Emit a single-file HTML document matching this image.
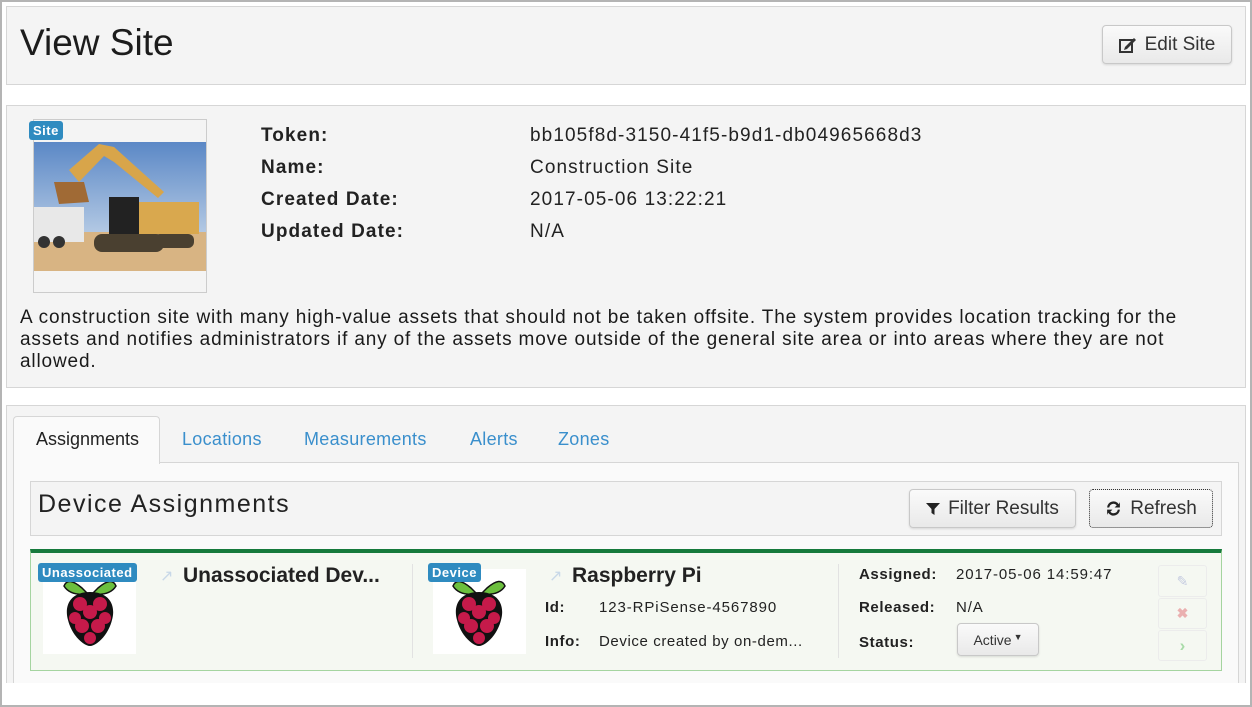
<!DOCTYPE html>
<html style="width:1252px;height:707px;overflow:hidden"><head><meta charset="utf-8"><style>
*{box-sizing:border-box;margin:0;padding:0}
body{width:1252px;height:707px;background:#fff;font-family:"Liberation Sans",sans-serif;color:#222;position:relative;overflow:hidden}
.abs{position:absolute}
.panel{background:#f4f4f4;border:1px solid #d6d6d6}
.btn{background:linear-gradient(#fafafa,#e9e9e9);border:1px solid #c8c8c8;border-radius:4px;box-shadow:0 1px 2px rgba(0,0,0,.12);font-size:19px;color:#333;display:flex;align-items:center;justify-content:center;gap:8px}
.badge{background:#2f8bc0;color:#fff;font-weight:bold;font-size:13px;border-radius:3px;padding:2px 4px;line-height:15px;letter-spacing:.5px}
.lbl{font-weight:bold;font-size:19px;color:#222;letter-spacing:1.1px}
.val{font-size:19px;color:#222;letter-spacing:1.1px}
.tab{font-size:18px;color:#3a8fcc;top:429px;letter-spacing:.3px}
.sm{font-size:15px;color:#222;letter-spacing:.9px}
.smb{font-size:15px;font-weight:bold;color:#222;letter-spacing:.6px}
</style></head><body>

<div class="abs panel" style="left:6px;top:6px;width:1240px;height:79px"></div>
<div class="abs" style="left:20px;top:22px;font-size:37px;color:#1c1c1c">View Site</div>
<div class="abs btn" style="left:1102px;top:25px;width:130px;height:39px">
<svg width="18" height="16" viewBox="0 0 18 16"><rect x="1" y="3" width="12" height="12" fill="none" stroke="#333" stroke-width="2"/><path d="M6 10 L15 1 L17 3 L8 12 L5 13Z" fill="#333"/></svg>Edit Site</div>

<div class="abs panel" style="left:6px;top:105px;width:1240px;height:283px"></div>
<div class="abs" style="left:33px;top:119px;width:174px;height:174px;border:1px solid #ccc;background:#f4f4f4"></div>
<svg class="abs" style="left:34px;top:142px" width="172" height="129" viewBox="0 0 172 129">
<defs><linearGradient id="sk" x1="0" y1="0" x2="0" y2="1"><stop offset="0" stop-color="#5b88c6"/><stop offset="1" stop-color="#d8e4f0"/></linearGradient></defs>
<rect width="172" height="129" fill="url(#sk)"/>
<rect y="90" width="172" height="39" fill="#d8b483"/>
<rect x="0" y="65" width="50" height="35" fill="#e8e8e8"/><circle cx="10" cy="100" r="6" fill="#333"/><circle cx="25" cy="100" r="6" fill="#333"/>
<path d="M35 28 L65 2 L80 5 L130 50 L124 56 L80 20 L70 14 L45 40Z" fill="#d8a54a"/>
<path d="M20 40 L50 40 L55 60 L25 62Z" fill="#a06a35"/>
<rect x="95" y="60" width="70" height="32" fill="#d9a84e"/><rect x="75" y="55" width="30" height="38" fill="#222"/>
<rect x="60" y="92" width="70" height="18" rx="8" fill="#4a4030"/><rect x="120" y="92" width="40" height="14" rx="6" fill="#4a4030"/>
</svg>
<div class="abs badge" style="left:29px;top:121px">Site</div>

<div class="abs lbl" style="left:261px;top:125px">Token:</div>
<div class="abs lbl" style="left:261px;top:157px">Name:</div>
<div class="abs lbl" style="left:261px;top:189px">Created Date:</div>
<div class="abs lbl" style="left:261px;top:221px">Updated Date:</div>
<div class="abs val" style="left:530px;top:125px">bb105f8d-3150-41f5-b9d1-db04965668d3</div>
<div class="abs val" style="left:530px;top:157px">Construction Site</div>
<div class="abs val" style="left:530px;top:189px">2017-05-06 13:22:21</div>
<div class="abs val" style="left:530px;top:221px">N/A</div>
<div class="abs" style="left:20px;top:307px;width:1195px;font-size:19px;letter-spacing:.85px;line-height:22px;color:#1a1a1a">A construction site with many high-value assets that should not be taken offsite. The system provides location tracking for the assets and notifies administrators if any of the assets move outside of the general site area or into areas where they are not allowed.</div>

<div class="abs panel" style="left:6px;top:405px;width:1240px;height:278px;border-bottom:none"></div>
<div class="abs" style="left:13px;top:462px;width:1226px;height:221px;border:1px solid #d6d6d6;border-bottom:none;background:#fafafa"></div>
<div class="abs" style="left:13px;top:416px;width:147px;height:48px;background:#fafafa;border:1px solid #d6d6d6;border-bottom:none;border-radius:4px 4px 0 0"></div>
<div class="abs" style="left:36px;top:429px;font-size:18px;color:#222">Assignments</div>
<div class="abs tab" style="left:182px">Locations</div>
<div class="abs tab" style="left:304px">Measurements</div>
<div class="abs tab" style="left:470px">Alerts</div>
<div class="abs tab" style="left:558px">Zones</div>

<div class="abs panel" style="left:30px;top:481px;width:1192px;height:55px"></div>
<div class="abs" style="left:38px;top:490px;font-size:25px;color:#222;letter-spacing:1.5px">Device Assignments</div>
<div class="abs btn" style="left:909px;top:489px;width:167px;height:39px">
<svg width="14" height="14" viewBox="0 0 14 14"><path d="M0 1 H14 L8.5 7 V13 L5.5 11 V7Z" fill="#222"/></svg>Filter Results</div>
<div class="abs btn" style="left:1089px;top:489px;width:124px;height:39px;border:1px dotted #333;box-shadow:none">
<svg width="17" height="17" viewBox="0 0 16 16"><path d="M2 7 A6 6 0 0 1 13 4 L14 2 V7 H9 L11 5 A4 4 0 0 0 4 7Z M14 9 A6 6 0 0 1 3 12 L2 14 V9 H7 L5 11 A4 4 0 0 0 12 9Z" fill="#222"/></svg>Refresh</div>

<div class="abs" style="left:30px;top:549px;width:1192px;height:122px;background:#f5f8f2;border:1px solid #a5d4a0;border-top:4px solid #167a3c"></div>
<div class="abs" style="left:412px;top:564px;width:1px;height:94px;background:#e2e2e2"></div>
<div class="abs" style="left:838px;top:564px;width:1px;height:94px;background:#e2e2e2"></div>

<svg width="0" height="0" style="position:absolute"><defs>
<g id="rpi">
<path d="M24 12 Q10 0 6 10 Q12 20 30 18Z M40 12 Q54 0 58 10 Q52 20 34 18Z" fill="#6cbf3e" stroke="#111" stroke-width="1.5"/>
<path d="M32 16 C12 16 6 30 10 44 C14 60 26 70 32 70 C38 70 50 60 54 44 C58 30 52 16 32 16Z" fill="#111"/>
<g fill="#c51a4a"><circle cx="22" cy="28" r="7"/><circle cx="42" cy="28" r="7"/><circle cx="32" cy="36" r="7"/><circle cx="17" cy="42" r="6"/><circle cx="47" cy="42" r="6"/><circle cx="24" cy="50" r="7"/><circle cx="40" cy="50" r="7"/><circle cx="32" cy="62" r="6"/></g>
</g></defs></svg>
<div class="abs" style="left:43px;top:569px;width:93px;height:85px;background:#fff"></div>
<svg class="abs" style="left:58px;top:576px" width="64" height="72" viewBox="0 0 64 72"><use href="#rpi"/></svg>
<div class="abs badge" style="left:38px;top:563px">Unassociated</div>
<div class="abs" style="left:433px;top:569px;width:93px;height:85px;background:#fff"></div>
<svg class="abs" style="left:447px;top:576px" width="64" height="72" viewBox="0 0 64 72"><use href="#rpi"/></svg>
<div class="abs badge" style="left:428px;top:563px">Device</div>

<div class="abs" style="left:160px;top:566px;font-size:16px;color:#c8d8e8">&#x2197;</div>
<div class="abs" style="left:183px;top:564px;font-size:21px;font-weight:bold;color:#222">Unassociated Dev...</div>
<div class="abs" style="left:549px;top:566px;font-size:16px;color:#c8d8e8">&#x2197;</div>
<div class="abs" style="left:572px;top:564px;font-size:21px;font-weight:bold;color:#222">Raspberry Pi</div>
<div class="abs smb" style="left:545px;top:599px">Id:</div>
<div class="abs sm" style="left:599px;top:599px">123-RPiSense-4567890</div>
<div class="abs smb" style="left:545px;top:633px">Info:</div>
<div class="abs sm" style="left:599px;top:633px;letter-spacing:.6px">Device created by on-dem...</div>

<div class="abs smb" style="left:859px;top:566px">Assigned:</div>
<div class="abs sm" style="left:956px;top:566px">2017-05-06 14:59:47</div>
<div class="abs smb" style="left:859px;top:599px">Released:</div>
<div class="abs sm" style="left:956px;top:599px">N/A</div>
<div class="abs smb" style="left:859px;top:634px">Status:</div>
<div class="abs btn" style="left:957px;top:623px;width:82px;height:33px;font-size:14px;gap:2px">Active<span style="font-size:9px;position:relative;top:-3px">&#9660;</span></div>

<div class="abs" style="left:1158px;top:565px;width:49px;height:32px;border:1px solid #ececec;border-radius:3px;color:#c5cbe0;font-size:14px;text-align:center;line-height:30px">&#x270E;</div>
<div class="abs" style="left:1158px;top:598px;width:49px;height:31px;border:1px solid #ececec;border-radius:3px;color:#eab0b0;font-size:14px;font-weight:bold;text-align:center;line-height:29px">&#x2716;</div>
<div class="abs" style="left:1158px;top:630px;width:49px;height:31px;border:1px solid #ececec;border-radius:3px;color:#a8dba8;font-size:17px;font-weight:bold;text-align:center;line-height:29px">&#x203A;</div>

<div class="abs" style="left:0;top:683px;width:1252px;height:24px;background:#fff"></div>
<div class="abs" style="left:0;top:0;width:1252px;height:2px;background:#b4b4b4"></div>
<div class="abs" style="left:0;top:705px;width:1252px;height:2px;background:#b4b4b4"></div>
<div class="abs" style="left:0;top:0;width:2px;height:707px;background:#b4b4b4"></div>
<div class="abs" style="left:1250px;top:0;width:2px;height:707px;background:#b4b4b4"></div>
</body></html>
